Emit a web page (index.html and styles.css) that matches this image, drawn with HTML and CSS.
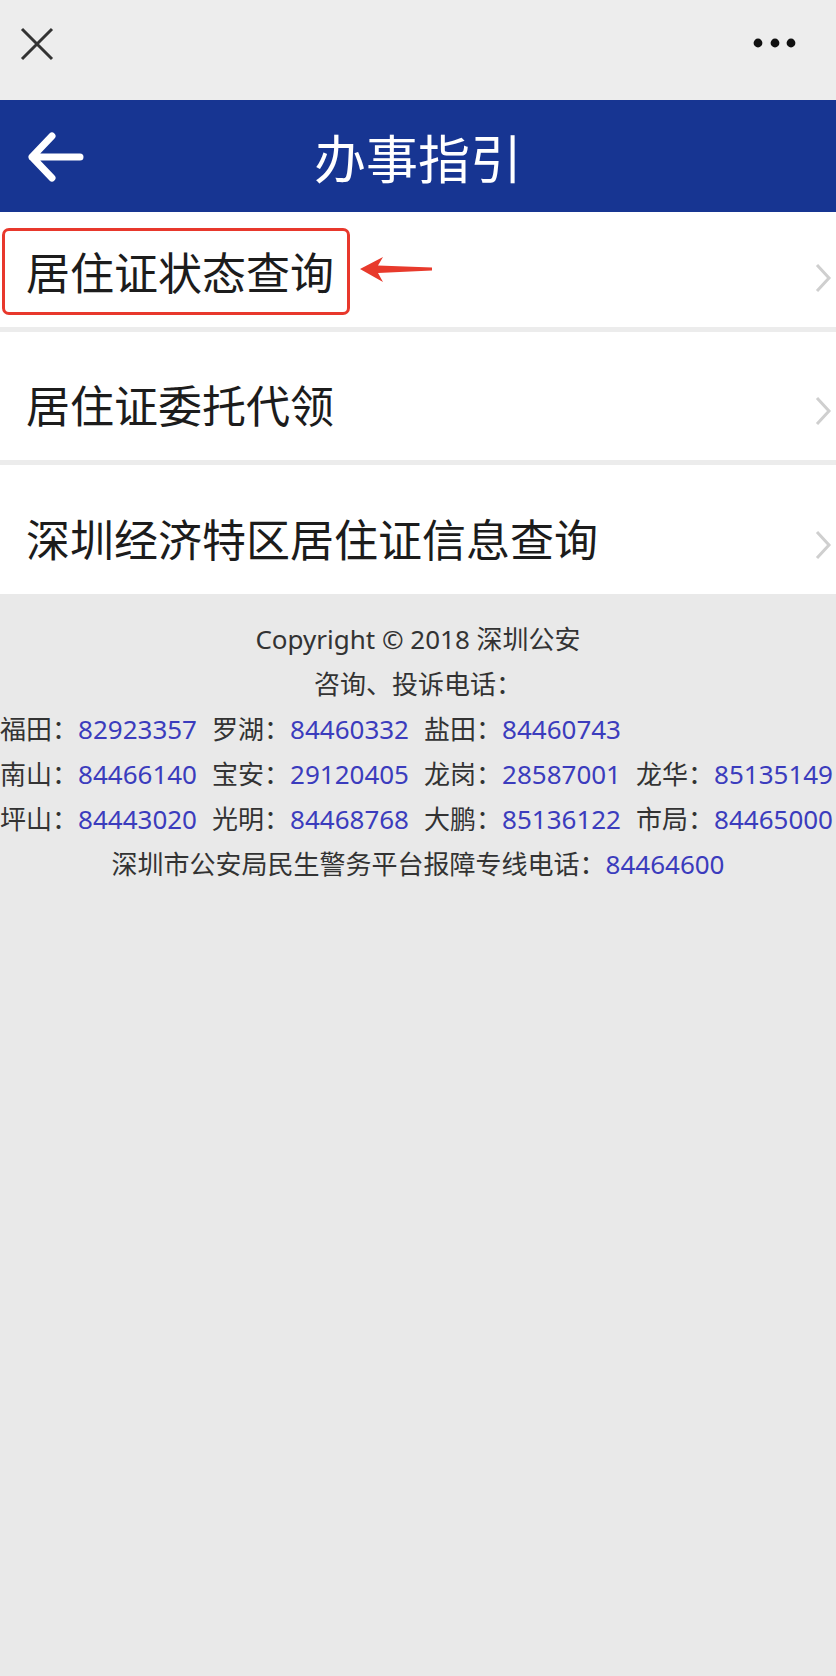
FILE: index.html
```html
<!DOCTYPE html>
<html>
	<head>
		<meta charset="utf-8">
		<title>办事指引</title>
		<link rel="stylesheet" href="styles.css">
	</head>
	<body>
	<div class="topbar">
		<svg class="close" width="34" height="34" viewBox="0 0 34 34">
			<path d="M2 2 L32 32 M32 2 L2 32" stroke="#333" stroke-width="3" fill="none"/>
		</svg>
		<svg class="more" width="50" height="16" viewBox="0 0 50 16">
			<circle cx="8" cy="8" r="4.4" fill="#111"/>
			<circle cx="25" cy="8" r="4.4" fill="#111"/>
			<circle cx="41" cy="8" r="4.4" fill="#111"/>
		</svg>
	</div>

	<div class="navbar">
		<div class="nav-left">
			<svg width="60" height="54" viewBox="0 0 60 54">
				<path d="M8 27 L56 27 M28 6 L8 27 L28 48" stroke="#fff" stroke-width="7" fill="none" stroke-linecap="round" stroke-linejoin="round"/>
			</svg>
		</div>
		<div class="nav-title">办事指引</div>
		<div></div>
	</div>

	<div class="menu">
		<div class="menu-item first">
			<span class="item-text">居住证状态查询</span>
			<svg class="chev" width="18" height="32" viewBox="0 0 18 32"><path d="M3 3 L15 16 L3 29" stroke="#cfcfcf" stroke-width="3" fill="none"/></svg>
			<div class="mark"></div>
			<svg class="mark-arrow" width="80" height="36" viewBox="0 0 80 36">
				<path d="M4 17 L27 5 L22 13.5 L76 15.5 L76 18.5 L22 21 L27 30 Z" fill="#e83a2c"/>
			</svg>
		</div>
		<div class="menu-item">
			<span class="item-text">居住证委托代领</span>
			<svg class="chev" width="18" height="32" viewBox="0 0 18 32"><path d="M3 3 L15 16 L3 29" stroke="#cfcfcf" stroke-width="3" fill="none"/></svg>
		</div>
		<div class="menu-item">
			<span class="item-text">深圳经济特区居住证信息查询</span>
			<svg class="chev" width="18" height="32" viewBox="0 0 18 32"><path d="M3 3 L15 16 L3 29" stroke="#cfcfcf" stroke-width="3" fill="none"/></svg>
		</div>
	</div>

	<div class="footer">
		<p>Copyright © 2018 深圳公安</p>
		<p>咨询、投诉电话：</p>
		<div class="phone-row">
			<span class="ph"><span class="area">福田：</span><span class="num">82923357</span></span>
			<span class="ph"><span class="area">罗湖：</span><span class="num">84460332</span></span>
			<span class="ph"><span class="area">盐田：</span><span class="num">84460743</span></span>
		</div>
		<div class="phone-row">
			<span class="ph"><span class="area">南山：</span><span class="num">84466140</span></span>
			<span class="ph"><span class="area">宝安：</span><span class="num">29120405</span></span>
			<span class="ph"><span class="area">龙岗：</span><span class="num">28587001</span></span>
			<span class="ph"><span class="area">龙华：</span><span class="num">85135149</span></span>
		</div>
		<div class="phone-row">
			<span class="ph"><span class="area">坪山：</span><span class="num">84443020</span></span>
			<span class="ph"><span class="area">光明：</span><span class="num">84468768</span></span>
			<span class="ph"><span class="area">大鹏：</span><span class="num">85136122</span></span>
			<span class="ph"><span class="area">市局：</span><span class="num">84465000</span></span>
		</div>
		<p>深圳市公安局民生警务平台报障专线电话：<span class="num">84464600</span></p>
	</div>
	</body>
</html>
```

FILE: styles.css
```css
html,
body {
  min-height: 100%;
}
body {
  margin: 0;
  background: #e9e9e9;
  font-family: "Noto Sans CJK SC", sans-serif;
}
.topbar {
  height: 100px;
  box-sizing: border-box;
  background: #ededed;
  display: flex;
  justify-content: space-between;
  align-items: flex-start;
  padding: 27px 36px 0 20px;
}
.topbar .more {
  margin-top: 8px;
}
.navbar {
  height: 112px;
  background: #173592;
  display: grid;
  grid-template-columns: 1fr auto 1fr;
  align-items: center;
}
.nav-left {
  padding-left: 24px;
  padding-top: 2px;
  display: flex;
}
.nav-title {
  color: #fff;
  font-size: 52px;
  line-height: 1;
  padding-top: 2px;
}
.menu-item {
  position: relative;
  height: 133px;
  box-sizing: border-box;
  background: #fff;
  display: flex;
  align-items: flex-end;
  padding: 0 4px 34px 26px;
  border-bottom: 5px solid #ececec;
}
.menu-item.first {
  height: 120px;
}
.menu-item:last-child {
  height: 129px;
  border-bottom: 0;
}
.item-text {
  font-size: 44px;
  line-height: 44px;
  color: #1c1c1c;
}
.chev {
  margin-left: auto;
  margin-bottom: -1px;
}
.mark {
  position: absolute;
  left: 2px;
  top: 16px;
  width: 348px;
  height: 87px;
  box-sizing: border-box;
  border: 3.5px solid #e8382c;
  border-radius: 7px;
}
.mark-arrow {
  position: absolute;
  left: 356px;
  top: 40px;
}
.footer {
  padding-top: 23px;
  font-family: "Noto Sans", "Noto Sans CJK SC", sans-serif;
  font-size: 26px;
  line-height: 45px;
  color: #333;
}
.footer p {
  margin: 0;
  text-align: center;
}
.phone-row {
  display: flex;
  gap: 15px;
  white-space: nowrap;
}
.num {
  color: #3b3cbd;
}
```
